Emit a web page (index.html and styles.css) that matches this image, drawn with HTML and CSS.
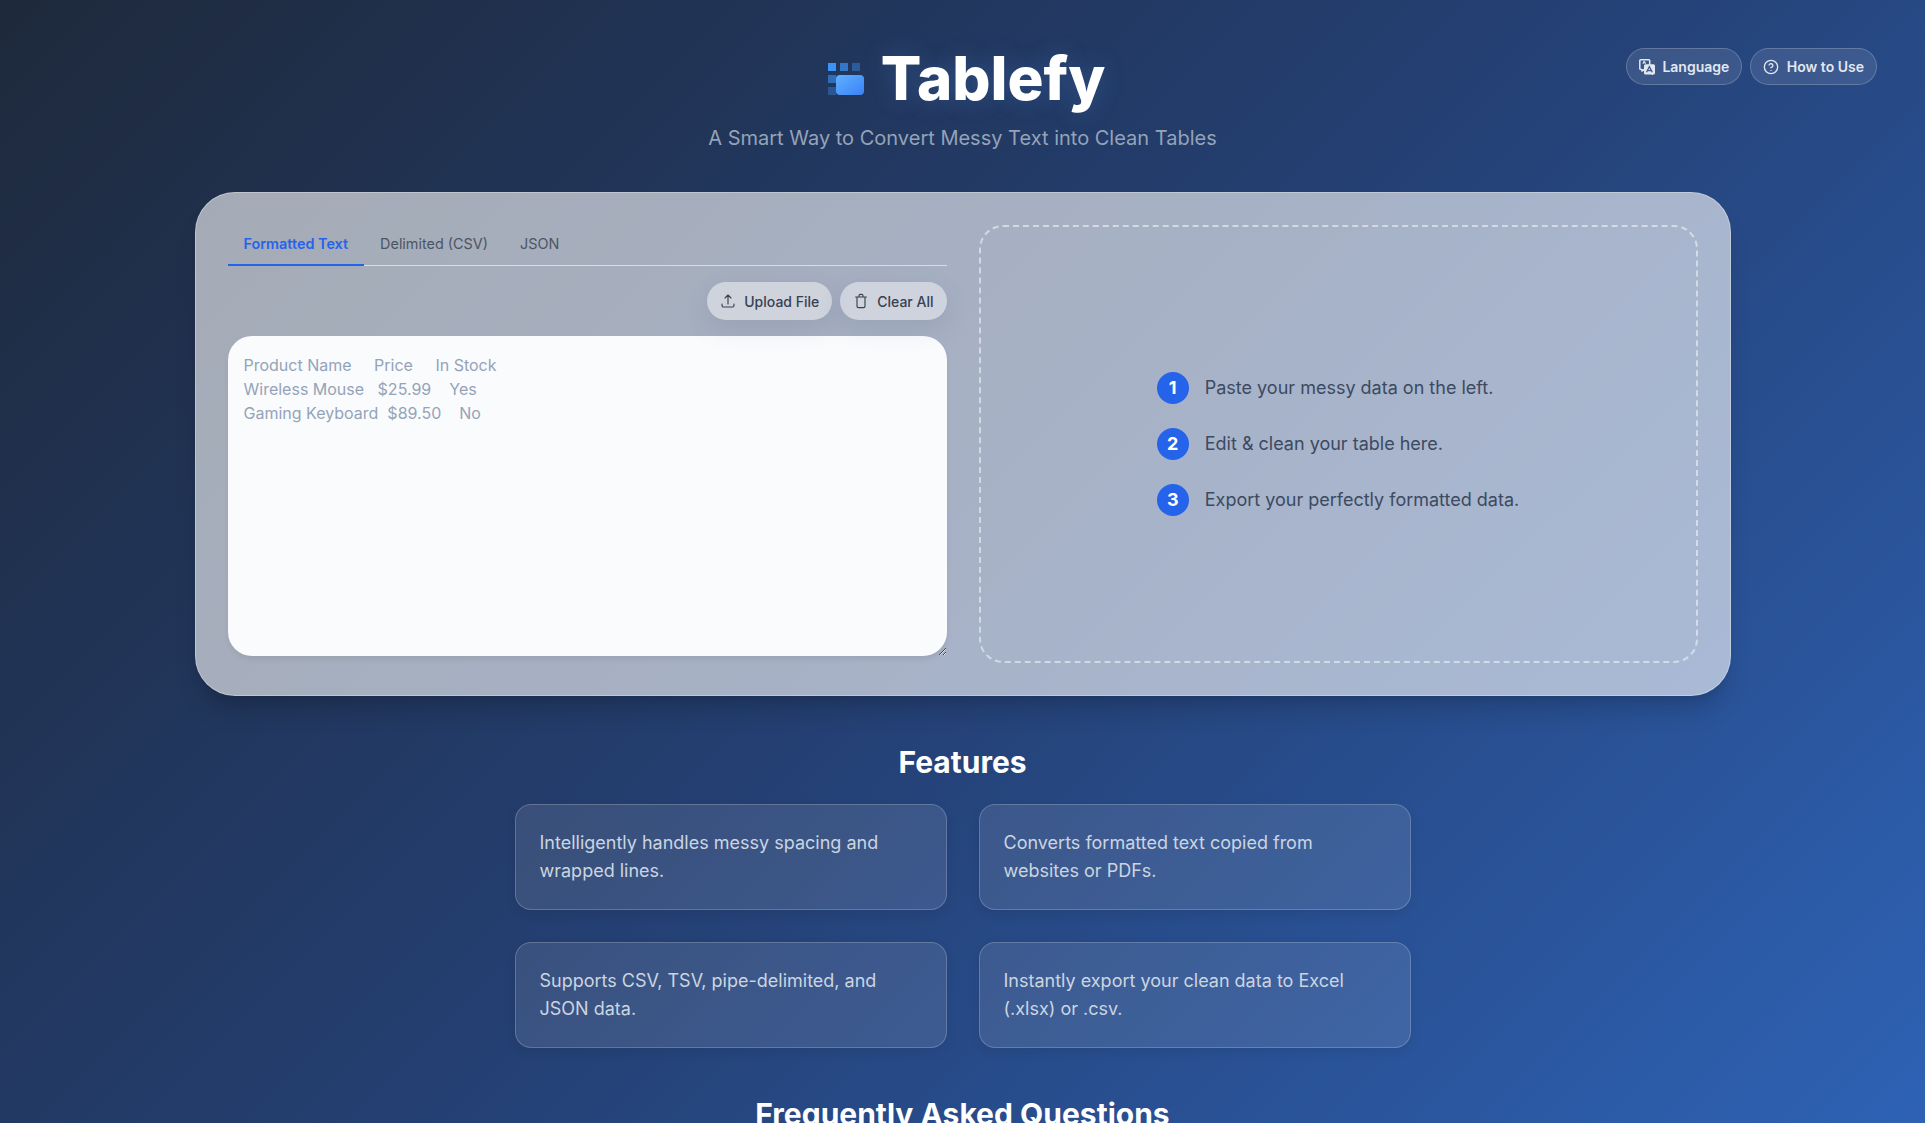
FILE: index.html
```html
<!DOCTYPE html>
<html lang="en">
<head>
<meta charset="utf-8">
<title>Tablefy</title>
<link rel="stylesheet" href="styles.css">
</head>
<body>
<div class="top-actions">
  <button class="pill"><svg class="pill-icon" viewBox="0 0 16 16"><path fill="none" stroke="currentColor" stroke-width="1.500" stroke-linejoin="round" d="M1.800.800h7.900a1 1 0 0 1 1 1v7.600a1 1 0 0 1-1 1H5.500L3 12V10.400H1.800a1 1 0 0 1-1-1V1.800a1 1 0 0 1 1-1z"/><path fill="currentColor" d="M6.500 5.200h8a1.500 1.500 0 0 1 1.500 1.500v7.300a1.500 1.500 0 0 1-1.500 1.500h-.5V16l-2.500-.500H6.500A1.500 1.500 0 0 1 5 14V6.700a1.500 1.500 0 0 1 1.500-1.500z"/><path fill="none" stroke="#3f5a8c" stroke-width="1.300" d="M7.500 13.300l2.900-5.600 2.900 5.600M8.600 11.600h3.600"/><path fill="none" stroke="currentColor" stroke-width="1.100" d="M4 4.800c.2-1 .6-1.800 1.200-2.300.6.500 1 1.300 1.200 2.300"/></svg>Language</button>
  <button class="pill"><svg class="pill-icon" viewBox="0 0 24 24" fill="none" stroke="currentColor" stroke-width="2" stroke-linecap="round" stroke-linejoin="round"><circle cx="12" cy="12" r="10"/><path d="M9.100 9a3 3 0 0 1 5.800 1c0 2-3 3-3 3"/><path d="M12 17h.01"/></svg>How to Use</button>
</div>

<header class="hero">
  <h1 class="brand">
    <svg class="logo" viewBox="0 0 36 32">
      <defs><linearGradient id="lg" x1="0" y1="0" x2="1" y2="1"><stop offset="0" stop-color="#5fb0ff"/><stop offset="1" stop-color="#3b82f6"/></linearGradient></defs>
      <rect x="0" y="0" width="8" height="8" fill="#3b93f5"/>
      <rect x="12" y="0" width="8" height="8" fill="#3b93f5" opacity=".7"/>
      <rect x="24" y="0" width="8" height="8" fill="#3b93f5" opacity=".4"/>
      <rect x="0" y="12" width="8" height="8" fill="#3b93f5" opacity=".6"/>
      <rect x="0" y="24" width="8" height="8" fill="#3b93f5" opacity=".35"/>
      <rect x="8" y="12" width="28" height="20" rx="4" fill="url(#lg)"/>
    </svg>
    <span>Tablefy</span>
  </h1>
  <p class="tagline">A Smart Way to Convert Messy Text into Clean Tables</p>
</header>

<main class="panel">
  <section class="input-col">
    <nav class="tabs">
      <a class="tab active">Formatted Text</a>
      <a class="tab">Delimited (CSV)</a>
      <a class="tab">JSON</a>
    </nav>
    <div class="tools">
      <button class="tool"><svg class="tool-icon" viewBox="0 0 24 24" fill="none" stroke="currentColor" stroke-width="1.700" stroke-linecap="round" stroke-linejoin="round"><path d="M3 16.500v2.250A2.250 2.250 0 0 0 5.250 21h13.500A2.250 2.250 0 0 0 21 18.750V16.500M16.500 7.500 12 3 7.500 7.500M12 3v13.500"/></svg>Upload File</button>
      <button class="tool"><svg class="tool-icon" viewBox="0 0 24 24" fill="none" stroke="currentColor" stroke-width="1.700" stroke-linecap="round" stroke-linejoin="round"><path d="M4 6h16M6 6v14a2 2 0 0 0 2 2h8a2 2 0 0 0 2-2V6M9 6V4a2 2 0 0 1 2-2h2a2 2 0 0 1 2 2v2"/></svg>Clear All</button>
    </div>
    <textarea class="source" placeholder="Product Name     Price     In Stock&#10;Wireless Mouse   $25.99    Yes&#10;Gaming Keyboard  $89.50    No"></textarea>
  </section>
  <section class="output-col">
    <ol class="steps">
      <li class="step"><span class="num">1</span>Paste your messy data on the left.</li>
      <li class="step"><span class="num">2</span>Edit &amp; clean your table here.</li>
      <li class="step"><span class="num">3</span>Export your perfectly formatted data.</li>
    </ol>
  </section>
</main>

<section class="features">
  <h2 class="section-title">Features</h2>
  <div class="feature-grid">
    <div class="feature">Intelligently handles messy spacing and wrapped lines.</div>
    <div class="feature">Converts formatted text copied from websites or PDFs.</div>
    <div class="feature">Supports CSV, TSV, pipe-delimited, and JSON data.</div>
    <div class="feature">Instantly export your clean data to Excel (.xlsx) or .csv.</div>
  </div>
</section>

<section class="faq">
  <h2 class="section-title">Frequently Asked Questions</h2>
</section>
</body>
</html>
```
FILE: styles.css
```css
* { box-sizing: border-box; }
html, body { height: 100%; }
html { overflow: hidden; }
body {
  margin: 0;
  padding: 48px 194.5px 0;
  font-family: Inter, "Liberation Sans", sans-serif;
  color: #fff;
  background: linear-gradient(135deg, #1e293b 0%, #243f72 50%, #2e62b5 100%) no-repeat;
  position: relative;
  overflow: hidden;
}
.top-actions {
  position: absolute;
  top: 48px;
  right: 48px;
  display: flex;
  gap: 8px;
}
.pill {
  display: flex;
  align-items: center;
  gap: 7.5px;
  height: 37px;
  padding: 0 12px;
  border: 1px solid rgba(255,255,255,.2);
  border-radius: 999px;
  background: rgba(255,255,255,.1);
  color: #e2e8f0;
  font: 600 14px Inter, sans-serif;
}
.pill-icon { width: 16px; height: 16px; }
.hero { text-align: center; margin-bottom: 40px; }
.brand {
  margin: 0;
  padding-left: 8px;
  display: flex;
  justify-content: center;
  align-items: center;
  gap: 17px;
  font-size: 60px;
  line-height: 60px;
  font-weight: 800;
  text-shadow: 0 0 24px rgba(96,165,250,.22);
}
.logo { width: 36px; height: 32px; margin-top: 2px; }
.tagline { margin: 16px 0 0; font-size: 20px; line-height: 28px; color: #94a3b8; }
.panel {
  display: grid;
  grid-template-columns: 1fr 1fr;
  gap: 32px;
  padding: 32px;
  border: 1px solid rgba(255,255,255,.3);
  border-radius: 40px;
  background: rgba(255,255,255,.6);
  box-shadow: 0 20px 25px -5px rgba(0,0,0,.15), 0 8px 10px -6px rgba(0,0,0,.1);
}
.tabs {
  display: flex;
  height: 41px;
  border-bottom: 1px solid #d7dde6;
}
.tab {
  height: 41px;
  padding: 9px 16px;
  font-size: 14.400px;
  line-height: 20px;
  font-weight: 400;
  color: #4b5563;
  border-bottom: 2px solid transparent;
}
.tab.active { color: #2563eb; font-weight: 600; border-bottom-color: #2563eb; }
.tools {
  position: relative;
  display: flex;
  justify-content: flex-end;
  gap: 8px;
  margin: 16px 0;
}
.tool {
  display: flex;
  align-items: center;
  gap: 8px;
  height: 38px;
  padding: 0 13px;
  border: 0;
  border-radius: 999px;
  background: rgba(255,255,255,.45);
  color: #374151;
  font: 500 14px Inter, sans-serif;
  box-shadow: 0 8px 24px rgba(71,85,130,.15);
}
.tool-icon { width: 16px; height: 16px; }
.source {
  display: inline-block;
  width: 100%;
  height: 320px;
  margin-bottom: 3px;
  padding: 17px 16px 16px;
  border: 0;
  outline: 0;
  border-radius: 24px;
  background: #fafbfd;
  font: 400 16px/24px Inter, sans-serif;
  color: #1f2937;
  box-shadow: 0 4px 6px -1px rgba(0,0,0,.08);
}
.source::placeholder { color: #94a3b8; opacity: 1; }
.output-col {
  display: flex;
  align-items: center;
  justify-content: center;
  border: 2px dashed rgba(255,255,255,.5);
  border-radius: 24px;
}
.steps {
  list-style: none;
  margin: 0;
  padding: 0;
  display: flex;
  flex-direction: column;
  gap: 24px;
}
.step {
  display: flex;
  align-items: center;
  gap: 16px;
  font-size: 18px;
  line-height: 28px;
  color: #3c4a61;
}
.num {
  width: 32px;
  height: 32px;
  flex: none;
  display: flex;
  align-items: center;
  justify-content: center;
  border-radius: 50%;
  background: #2563eb;
  color: #fff;
  font-weight: 700;
  font-size: 18px;
}
.section-title {
  margin: 0;
  text-align: center;
  font-size: 30px;
  line-height: 36px;
  font-weight: 700;
}
.features { margin-top: 48px; }
.feature-grid {
  width: 896px;
  margin: 24px auto 0;
  display: grid;
  grid-template-columns: 1fr 1fr;
  gap: 32px;
}
.feature {
  padding: 24px;
  border: 1px solid rgba(255,255,255,.2);
  border-radius: 16px;
  background: rgba(255,255,255,.1);
  color: #cbd5e1;
  font-size: 18px;
  line-height: 28px;
  box-shadow: 0 4px 12px rgba(0,0,0,.08);
}
.faq { margin-top: 48px; }
```
